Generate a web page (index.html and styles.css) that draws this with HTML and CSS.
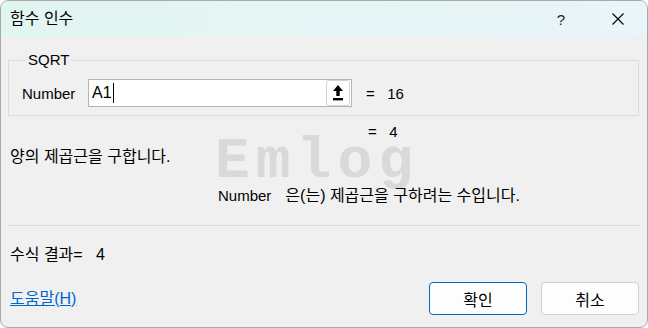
FILE: index.html
```html
<!DOCTYPE html>
<html lang="ko">
<head>
    <meta charset="UTF-8">
    <title>함수 인수</title>
    <link rel="stylesheet" href="styles.css">
</head>
<body>
    <div class="dialog">
        <!-- Title bar -->
        <div class="titlebar">
            <span class="title">함수 인수</span>
            <span class="help-btn">?</span>
            <span class="close-btn">
                <svg width="12" height="12" viewBox="0 0 12 12"><path d="M0.5 0.5 L11.5 11.5 M11.5 0.5 L0.5 11.5" stroke="#000" stroke-width="1.1" fill="none"/></svg>
            </span>
        </div>

        <!-- Content -->
        <div class="content">
            <div class="watermark">Emlog</div>

            <fieldset class="group">
                <legend>SQRT</legend>
                <div class="arg-row">
                    <span class="arg-label">Number</span>
                    <div class="arg-input">
                        <span class="arg-value">A1</span>
                        <span class="ref-btn">
                            <svg width="10" height="16" viewBox="0 0 10 16">
                                <path d="M5 0 L0 6 L3.3 6 L3.3 11 L6.7 11 L6.7 6 L10 6 Z" fill="#000"/>
                                <rect x="0" y="13" width="10" height="2.4" fill="#000"/>
                            </svg>
                        </span>
                    </div>
                    <span class="arg-result">=&nbsp;&nbsp;&nbsp;16</span>
                </div>
            </fieldset>

            <div class="func-result">=&nbsp;&nbsp;&nbsp;4</div>
            <div class="func-desc">양의 제곱근을 구합니다.</div>
            <div class="arg-desc"><span class="arg-desc-name">Number</span>은(는) 제곱근을 구하려는 수입니다.</div>

            <hr class="divider">

            <div class="formula-result">수식 결과=&nbsp;&nbsp;&nbsp;4</div>

            <div class="footer">
                <a href="#" class="help-link">도움말(H)</a>
                <div class="buttons">
                    <button class="btn btn-primary">확인</button>
                    <button class="btn">취소</button>
                </div>
            </div>
        </div>
    </div>
</body>
</html>
```

FILE: styles.css
```css
* {
    margin: 0;
    padding: 0;
    box-sizing: border-box;
}

body {
    background: #ffffff;
    font-family: "Liberation Sans", "Noto Sans CJK KR", sans-serif;
    font-size: 16px;
    color: #000;
}

.dialog {
    width: 648px;
    height: 328px;
    border: 1px solid #a8a8a8;
    border-radius: 8px;
    background: #f0f0f0;
    overflow: hidden;
    display: flex;
    flex-direction: column;
}

/* Title bar */
.titlebar {
    height: 36px;
    flex-shrink: 0;
    display: flex;
    align-items: center;
    padding-left: 9px;
    background: linear-gradient(90deg, #e1f5f1, #e9f5f9);
}

.title {
    flex: 1;
    line-height: 20px;
}

.help-btn {
    width: 12px;
    text-align: center;
    margin-right: 45px;
    font-size: 15px;
    color: #222;
}

.close-btn {
    display: flex;
    margin-right: 23px;
}

/* Content */
.content {
    position: relative;
    flex: 1;
    padding: 0 8px 0 7px;
    display: flex;
    flex-direction: column;
}

.watermark {
    position: absolute;
    left: 214px;
    top: 95px;
    font-family: "Liberation Mono", monospace;
    font-weight: bold;
    font-size: 58px;
    letter-spacing: 6px;
    line-height: 60px;
    color: #d9d9d9;
}

.group {
    margin-top: 14px;
    border: 1px solid #dcdcdc;
    padding: 10px 0 8px 13px;
}

.group legend {
    margin-left: 4px;
    padding: 0 2px;
    font-size: 15px;
    line-height: 18px;
}

.arg-row {
    display: flex;
    align-items: center;
    height: 28px;
    font-size: 15px;
}

.arg-label {
    width: 66px;
}

.arg-input {
    width: 264px;
    height: 28px;
    background: #fff;
    border: 1px solid #b4b4b4;
    display: flex;
    align-items: center;
    justify-content: space-between;
    padding: 0 1px 0 3px;
    font-size: 16px;
}

.arg-value {
    border-right: 1.5px solid #000;
    padding-right: 1px;
    line-height: 20px;
}

.ref-btn {
    width: 24px;
    height: 26px;
    border: 1px solid #d4d4d4;
    border-radius: 3px;
    display: flex;
    align-items: center;
    justify-content: center;
}

.arg-result {
    margin-left: 14px;
}

.func-result {
    position: relative;
    margin-top: 6px;
    padding-left: 360px;
    font-size: 15px;
    line-height: 20px;
}

.func-desc {
    position: relative;
    margin-top: 5px;
    padding-left: 2px;
    line-height: 20px;
}

.arg-desc {
    position: relative;
    margin-top: 19px;
    padding-left: 210px;
    line-height: 20px;
}

.arg-desc-name {
    font-size: 15px;
    margin-right: 14px;
}

.divider {
    border: none;
    border-top: 1px solid #dadada;
    margin-top: 19px;
}

.formula-result {
    margin-top: 19px;
    padding-left: 2px;
    line-height: 20px;
}

.footer {
    margin-top: 17px;
    display: flex;
    justify-content: space-between;
    align-items: center;
}

.help-link {
    margin-left: 2px;
    color: #0066cc;
    line-height: 20px;
}

.buttons {
    display: flex;
    gap: 14px;
}

.btn {
    width: 98px;
    height: 33px;
    background: #fdfdfd;
    border: 1px solid #d0d0d0;
    border-radius: 4px;
    font-family: "Liberation Sans", "Noto Sans CJK KR", sans-serif;
    font-size: 16px;
    color: #000;
}

.btn-primary {
    border: 1px solid #0067c0;
}
```
